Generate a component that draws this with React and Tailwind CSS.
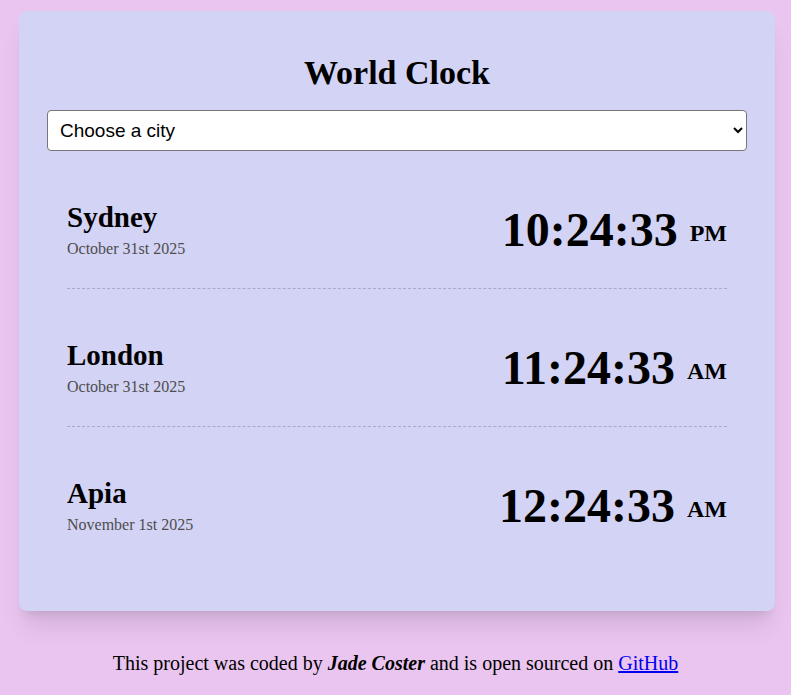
import React from 'react';

const cities = [
    {name: 'Sydney', date: 'October 31st 2025', time: '10:24:33', period: 'PM'},
    {name: 'London', date: 'October 31st 2025', time: '11:24:33', period: 'AM'},
    {name: 'Apia', date: 'November 1st 2025', time: '12:24:33', period: 'AM'},
];

// One row of the clock list
const CityRow = ({city, last}) => (
    <div className={`mx-5 flex items-center justify-between pt-[50px] pb-[29px] ${last ? '' : 'border-b border-dashed border-[#aba8c8]'}`}>
        <div>
            <h2 className="text-[29px] leading-[32px] font-bold text-black">{city.name}</h2>
            <div className="mt-[6px] text-[16px] leading-[20px] text-[#4d4d4d]">{city.date}</div>
        </div>
        <div className="text-[48px] leading-[56px] font-bold text-black whitespace-nowrap">
            {city.time}
            <span className="ml-[12px] text-[24px] leading-none align-[5px]">{city.period}</span>
        </div>
    </div>
);

export default function App() {
    return (
        <div className="min-h-[695px] bg-[#eac5f0] pt-[11px] pb-6 font-['Liberation_Serif',serif]">
            <div className="ml-[19px] mr-[16px] rounded-lg bg-[#d3d3f5] px-[28px] pt-[44px] pb-[47px] shadow-xl">
                <h1 className="text-center text-[34px] leading-[36px] font-bold text-black">World Clock</h1>
                <select
                    className="mt-[19px] block h-[41px] w-full rounded-[4px] border border-[#767676] bg-white pl-[8px] pr-2 font-['Liberation_Sans',sans-serif] text-[19px] text-black"
                    defaultValue=""
                >
                    <option value="">Choose a city</option>
                    <option value="tokyo">Tokyo</option>
                    <option value="new-york">New York</option>
                </select>
                <div>
                    {cities.map((city, i) => (
                        <CityRow key={city.name} city={city} last={i === cities.length - 1}/>
                    ))}
                </div>
            </div>
            <p className="mt-[39px] text-center text-[20px] leading-[27px] text-black">
                This project was coded by <strong><em>Jade Coster</em></strong> and is open sourced on{' '}
                <a href="#" className="text-[#0000ee] underline">GitHub</a>
            </p>
        </div>
    );
}
